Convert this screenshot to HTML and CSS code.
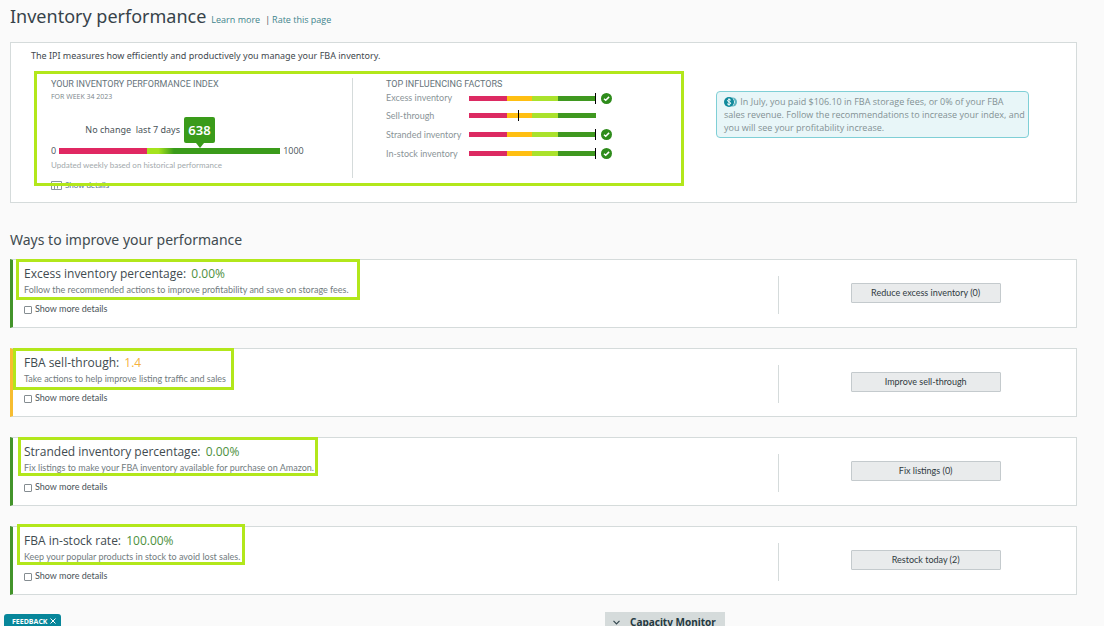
FILE: index.html
```html
<!DOCTYPE html>
<html lang="en">
<head>
<meta charset="utf-8">
<meta name="viewport" content="width=device-width, initial-scale=1">
<title>Inventory performance</title>
<link rel="stylesheet" href="styles.css">
</head>
<body>
<svg class="defs" aria-hidden="true">
  <symbol id="check" viewBox="0 0 11 11"><circle cx="5.5" cy="5.5" r="5.5" fill="#2e8b1b"/><path d="M3 5.8 4.7 7.3 8.1 3.9" fill="none" stroke="#fff" stroke-width="1.5"/></symbol>
</svg>
<div class="page">
  <header class="page-head">
    <h1 class="page-title">Inventory performance</h1>
    <nav class="page-links"><a href="#learn">Learn more</a><span class="sep">|</span><a href="#rate">Rate this page</a></nav>
  </header>

  <main>
    <section class="panel">
      <p class="intro">The IPI measures how efficiently and productively you manage your FBA inventory.</p>
      <span class="mark mark-index"></span>
      <div class="panel-grid">
        <div class="index">
          <h2 class="caps">YOUR INVENTORY PERFORMANCE INDEX</h2>
          <p class="week">FOR WEEK 34 2023</p>
          <div class="score">
            <span>No change&nbsp; last 7 days</span>
            <strong class="score-tag">638</strong>
          </div>
          <div class="scale"><span>0</span><span class="scale-bar"></span><span>1000</span></div>
          <p class="updated">Updated weekly based on historical performance</p>
          <a class="details" href="#details">
            <svg width="11" height="9" viewBox="0 0 11 9" fill="none" stroke="#8b989f"><path d="M.5.5h10v8H.5zM.5 2.5h10M3.5 2.5v6M6.5 4.5v3"/></svg>
            Show details
          </a>
        </div>

        <div class="factors">
          <h2 class="caps">TOP INFLUENCING FACTORS</h2>
          <ul class="factor-list">
            <li class="factor"><span>Excess inventory</span><span class="factor-bar"><i class="tick" style="left:100%"></i></span><svg class="ok"><use href="#check"/></svg></li>
            <li class="factor"><span>Sell-through</span><span class="factor-bar"><i class="tick" style="left:39%"></i></span></li>
            <li class="factor"><span>Stranded inventory</span><span class="factor-bar"><i class="tick" style="left:100%"></i></span><svg class="ok"><use href="#check"/></svg></li>
            <li class="factor"><span>In-stock inventory</span><span class="factor-bar"><i class="tick" style="left:100%"></i></span><svg class="ok"><use href="#check"/></svg></li>
          </ul>
        </div>

        <p class="note"><svg class="coin" viewBox="0 0 14 10"><circle cx="8.5" cy="5" r="4.5" fill="#5fb4bf"/><path d="M9 1.5q3 3.5 0 7" fill="none" stroke="#e6f7f9"/><circle cx="5" cy="5" r="5" fill="#118a9c"/><path d="M6.9 3.3C6.2 2.2 3.4 2.4 3.5 3.8 3.6 5.2 6.7 4.7 6.7 6.2 6.7 7.7 3.8 7.8 3.1 6.7M5 1.3v7.4" fill="none" stroke="#fff"/></svg> In July, you paid $106.10 in FBA storage fees, or 0% of your FBA<br>sales revenue. Follow the recommendations to increase your index, and you will see your profitability increase.</p>
      </div>
    </section>

    <h2 class="section-title">Ways to improve your performance</h2>

    <div class="cards">
      <article class="card">
        <span class="mark mark-excess"></span>
        <div class="card-body">
          <h3 class="card-title">Excess inventory percentage: <span class="value">0.00%</span></h3>
          <p class="card-text">Follow the recommended actions to improve profitability and save on storage fees.</p>
          <label class="more"><input type="checkbox">Show more details</label>
        </div>
        <div class="card-action"><button class="btn" type="button">Reduce excess inventory (0)</button></div>
      </article>

      <article class="card warn">
        <span class="mark mark-sell"></span>
        <div class="card-body">
          <h3 class="card-title">FBA sell-through: <span class="value">1.4</span></h3>
          <p class="card-text">Take actions to help improve listing traffic and sales</p>
          <label class="more"><input type="checkbox">Show more details</label>
        </div>
        <div class="card-action"><button class="btn" type="button">Improve sell-through</button></div>
      </article>

      <article class="card">
        <span class="mark mark-stranded"></span>
        <div class="card-body">
          <h3 class="card-title">Stranded inventory percentage: <span class="value">0.00%</span></h3>
          <p class="card-text">Fix listings to make your FBA inventory available for purchase on Amazon.</p>
          <label class="more"><input type="checkbox">Show more details</label>
        </div>
        <div class="card-action"><button class="btn" type="button">Fix listings (0)</button></div>
      </article>

      <article class="card">
        <span class="mark mark-stock"></span>
        <div class="card-body">
          <h3 class="card-title">FBA in-stock rate: <span class="value">100.00%</span></h3>
          <p class="card-text">Keep your popular products in stock to avoid lost sales.</p>
          <label class="more"><input type="checkbox">Show more details</label>
        </div>
        <div class="card-action"><button class="btn" type="button">Restock today (2)</button></div>
      </article>
    </div>
  </main>

  <footer class="dock">
    <button class="feedback" type="button">FEEDBACK <svg width="6" height="6" viewBox="0 0 6 6" stroke="#fff"><path d="M.5.5l5 5M5.5.5l-5 5"/></svg></button>
    <button class="capacity" type="button"><svg width="7" height="5" viewBox="0 0 7 5" fill="none" stroke="#33474f" stroke-width="1.2"><path d="M.5.8l3 3 3-3"/></svg>Capacity Monitor</button>
  </footer>
</div>
</body>
</html>
```
FILE: styles.css
```css
* { box-sizing: border-box; }

body {
  margin: 0;
  background: #fafafa;
  color: #4a5459;
  font: 9px/12px Lato, "Open Sans", sans-serif;
}

h1, h2, h3, p, ul { margin: 0; padding: 0; font-weight: 400; }
button { font: inherit; color: inherit; }
.defs { display: none; }

.page {
  display: flex;
  flex-direction: column;
  height: 100vh;
  overflow: hidden;
  border-bottom: 1px solid #fff;
}

main { flex: none; padding: 0 27px 0 10px; }

.page-head {
  display: flex;
  flex: none;
  align-items: baseline;
  gap: 5px;
  height: 42px;
  padding: 3px 10px 0;
}
.page-title { font-family: "Noto Sans", sans-serif; font-size: 18px; line-height: 26px; color: #37434a; }
.page-links { font-family: "Open Sans", sans-serif; }
.page-links a { color: #3f858d; text-decoration: none; }
.sep { margin: 0 2px 0 5px; }

.panel {
  position: relative;
  padding: 7px 47px 10px 20px;
  border: 1px solid #d5dbdb;
  background: #fff;
}
.intro { font-family: "Noto Sans", sans-serif; color: #3f494e; }
.panel-grid {
  display: grid;
  grid-template-columns: 322fr 363fr 313fr;
  padding-top: 16px;
}

.mark {
  position: absolute;
  z-index: 1;
  border: 3px solid #b2e71b;
  pointer-events: none;
}
.mark-index { top: 28px; left: 23px; width: 650px; height: 115px; }

.caps { font-family: Roboto, sans-serif; font-size: 9px; line-height: 12px; color: #66747b; }

.index { padding-left: 20px; border-right: 1px solid #d5dbdb; margin-bottom: 14px; height: 100px; }
.week { font-family: "Open Sans", sans-serif; font-size: 7px; line-height: 14px; color: #7b868b; }
.score { display: flex; align-items: center; gap: 4px; height: 26px; margin: 13px 0 4px; font-family: "Noto Sans", sans-serif; }
.score > span { width: 129px; text-align: right; }
.score-tag {
  position: relative;
  width: 31px;
  border-radius: 2px;
  background: #3a9b1a;
  color: #fff;
  font-size: 13px;
  font-weight: 600;
  line-height: 26px;
  text-align: center;
}
.score-tag::after {
  content: "";
  position: absolute;
  top: 100%;
  left: 50%;
  margin-left: -4px;
  border: 4px solid transparent;
  border-top: 5px solid #3a9b1a;
  border-bottom: 0;
}
.scale { display: flex; align-items: center; gap: 3px; font-family: "Open Sans", sans-serif; line-height: 8px; }
.scale-bar {
  width: 221px;
  height: 6px;
  background: linear-gradient(90deg, #e02862 40%, #a5e31d 40%, #a5e31d 45%, #3a9b1a 52%);
}
.updated { margin-top: 4px; color: #a2a9ac; font-size: 8px; }
.details { display: flex; align-items: center; gap: 3px; margin-top: 8px; color: #527688; font-size: 8px; text-decoration: none; }

.factors { padding-left: 33px; }
.factor-list { list-style: none; }
.factor {
  display: grid;
  grid-template-columns: 83px 127px 11px;
  align-items: center;
  height: 19px;
  color: #8a9498;
}
.factor:first-child { height: 16px; }
.factor-bar {
  position: relative;
  height: 5px;
  background: linear-gradient(90deg, #dc2a62 30%, #ffbf12 30%, #ffbf12 50%, #aae22c 50%, #aae22c 70%, #3f9820 70%);
}
.tick { position: absolute; top: -3px; width: 1px; height: 11px; margin-left: -1px; background: #000; }
.ok { width: 11px; height: 11px; margin-left: 5px; }

.note {
  align-self: start;
  margin-top: 13px;
  padding: 3px 0 3px 7px;
  border: 1px solid #7fcfd6;
  border-radius: 4px;
  background: #e8f6f8;
  color: #839194;
  font-family: "Open Sans", sans-serif;
  line-height: 13px;
}
.coin { width: 14px; height: 10px; vertical-align: -2px; }

.section-title { margin: 27px 0 9px; font-family: "Noto Sans", sans-serif; font-size: 14px; line-height: 20px; color: #414b50; }

.cards { display: grid; gap: 20px; }
.card {
  position: relative;
  display: grid;
  grid-template-columns: 72fr 28fr;
  min-height: 69px;
  border: 1px solid #d5dbdb;
  border-left: 3px solid #43942b;
  background: #fff;
}
.warn { border-left-color: #f7bd31; }
.card-body { padding: 5px 11px; }
.card-title { font-family: "Open Sans", sans-serif; font-size: 12px; line-height: 17px; color: #414b50; }
.value { margin-left: 2px; color: #4d9040; }
.warn .value { color: #f5b13c; }
.card-text { font-size: 9px; line-height: 15px; color: #727c80; }
.more { display: flex; align-items: center; gap: 3px; margin-top: 6px; font-size: 9px; line-height: 12px; }
.more input {
  appearance: none;
  width: 8px;
  height: 8px;
  margin: 1px 0 0;
  border: 1px solid #858d91;
  border-radius: 1px;
  background: #fff;
}
.more input:checked { background: #118a9c; }
.card-action { display: flex; align-items: center; justify-content: center; height: 38px; margin-top: 16px; padding: 0 4px 4px 0; border-left: 1px solid #d5dbdb; }
.btn {
  min-width: 150px;
  height: 20px;
  padding: 0 16px;
  border: 1px solid #c4cacd;
  border-radius: 1px;
  background: #e9ebec;
  color: #303a3f;
  font-size: 9px;
}

.mark-excess { top: -1px; left: 3px; width: 344px; height: 41px; }
.mark-sell { top: -1px; left: 0; width: 221px; height: 42px; }
.mark-stranded { top: -1px; left: 5px; width: 300px; height: 39px; }
.mark-stock { top: -3px; left: 4px; width: 228px; height: 41px; }

.dock {
  display: grid;
  grid-template-columns: 605px auto 1fr;
  flex: none;
  align-items: start;
  justify-items: start;
  padding-top: 17px;
}
.feedback {
  height: 20px;
  margin: 2px 0 0 4px;
  padding: 0 5px 4px 8px;
  border: 0;
  border-radius: 3px 3px 0 0;
  background: #07869a;
  color: #fff;
  font-family: "Open Sans", sans-serif;
  font-size: 7px;
  font-weight: 700;
}
.feedback svg { margin-left: 1px; }
.capacity {
  display: flex;
  align-items: center;
  gap: 10px;
  height: 20px;
  padding: 0 9px 0 8px;
  border: 0;
  background: #d5dbdb;
  color: #24393f;
  font-family: "Noto Sans", sans-serif;
  font-size: 10px;
  font-weight: 700;
}
```
